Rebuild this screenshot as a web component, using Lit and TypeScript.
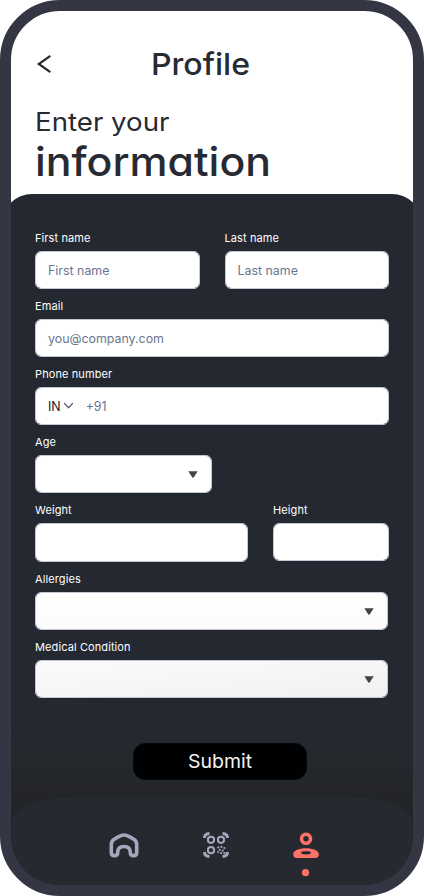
import { LitElement, html, svg, css, nothing } from "lit";
import { customElement, property } from "lit/decorators.js";

@customElement("fitted-text")
class FittedText extends LitElement {
  @property() text = "";
  @property({ type: Number }) width = 0;
  @property({ type: Number }) size = 16;
  static styles = css`
    :host { display: block; line-height: 0; }
    .run { display: block; overflow: visible; }
    .glyphs { fill: currentColor; font-feature-settings: "cv11" 1; }
  `;
  render() {
    const h = Math.round(this.size);
    return html`<svg class="run" width=${this.width} height=${h} role="img">
      ${svg`<text class="glyphs" x="0" y=${h - 4} font-size=${this.size} textLength=${this.width} lengthAdjust="spacingAndGlyphs">${this.text}</text>`}
    </svg>`;
  }
}

@customElement("form-field")
class FormField extends LitElement {
  @property() label = "";
  @property() placeholder = "";
  @property({ type: Boolean }) select = false;
  @property({ type: Boolean }) phone = false;
  static styles = css`
    :host { display: block; min-width: 0; }
    .label { display: block; height: 20px; line-height: 20px; font-size: 11px; font-weight: 400; letter-spacing: 0.1px; color: #fff; white-space: nowrap; }
    .box {
      box-sizing: border-box; height: var(--box-height, 38px); margin-top: 3px; padding: 0 13px 0 12px;
      display: flex; align-items: center; border: 1px solid #c3c7d3; border-radius: 6px;
      background: var(--box-fill, #fff) padding-box; font-size: 12.4px; color: #6b7690; box-shadow: 0 1px 1px #10182818;
    }
    .country { color: #151c2d; }
    .chevron { margin: 0 12px 0 2px; }
    .arrow { margin-left: auto; }
  `;
  render() {
    return html`
      <span class="label">${this.label}</span>
      <div class="box">
        ${this.phone
          ? html`<span class="country">IN</span>
              <svg class="chevron" width="11" height="8" viewBox="0 0 11 8" fill="none" stroke="#59647b" stroke-width="1.3" stroke-linecap="round" stroke-linejoin="round"><path d="M1.5 1.5 5.5 5.7 9.5 1.5" /></svg>`
          : nothing}
        <span>${this.placeholder}</span>
        ${this.select
          ? html`<svg class="arrow" width="10" height="7" viewBox="0 0 10 7"><path d="M.3.2h9.4L5.8 6.2q-.8 1-1.6 0z" fill="#444" /></svg>`
          : nothing}
      </div>
    `;
  }
}

@customElement("app-root")
class AppRoot extends LitElement {
  static styles = css`
    :host { display: block; width: 424px; height: 896px; background: #fff; font-family: Inter, "Liberation Sans", sans-serif; color: #272a32; }
    .phone {
      box-sizing: border-box; width: 424px; height: 896px; border: 11px solid #353643; border-radius: 60px;
      overflow: hidden; background: linear-gradient(#fff 50%, #353643 50%) border-box; display: flex; flex-direction: column;
    }
    .header { height: 183px; box-sizing: border-box; padding: 35px 24px 0; flex: none; }
    .bar { display: flex; align-items: center; height: 36px; }
    .back { margin-left: 1px; }
    .title { margin: -2px 0 0 99px; font-weight: 450; }
    .lead { margin: 27px 0 0 0; font-weight: 400; }
    .main { margin: 4px 0 0 0; font-weight: 450; }
    .panel {
      flex: 1; margin: 0 -9px; border-radius: 30px 30px 0 0; display: flex; flex-direction: column;
      background: linear-gradient(#252830 0%, #242830 70%, #25282d 82%, #232428 88%, #232428 100%);
    }
    .form { display: flex; flex-direction: column; gap: 7px; padding: 34px 33px 0; }
    .row { display: flex; gap: 25px; }
    .half { flex: 1; }
    .age { width: 177px; }
    .weight { width: 213px; --box-height: 39px; }
    .height { flex: 1; }
    .wide { margin-right: 1px; }
    .shade-a { --box-fill: linear-gradient(#fff, #fcfcfc); }
    .shade-b { --box-fill: linear-gradient(175deg, #fbfbfb, #f1f1f1); }
    .submit {
      width: 174px; height: 37px; margin: 45px 0 0 131px; padding: 1px 0 0; border: 1px solid #05080f; border-radius: 12px;
      background: #000102; color: #f4f4f4; display: flex; align-items: center; justify-content: center;
      box-sizing: border-box; font-family: Inter, "Liberation Sans", sans-serif; font-weight: 400;
    }
    .nav {
      box-sizing: border-box; margin: auto 9px 0; height: 88px; padding-left: 98px; border-radius: 60px 60px 49px 49px / 28px 28px 49px 49px;
      background: #262930; display: flex; align-items: flex-start;
    }
    .home { margin-top: 36px; }
    .scan { margin: 34px 0 0 64px; }
    .person { margin: 34px 0 0 64px; }
  `;
  render() {
    return html`
      <div class="phone">
        <header class="header">
          <div class="bar">
            <svg class="back" width="16" height="20" viewBox="0 0 16 20" fill="none" stroke="#272a32" stroke-width="2.2"><path d="M14.3 1.8 2.8 10l11.5 8.2" /></svg>
            <h1 class="title"><fitted-text text="Profile" width="99" size="30.5"></fitted-text></h1>
          </div>
          <p class="lead"><fitted-text text="Enter your" width="134.5" size="25.5"></fitted-text></p>
          <h2 class="main"><fitted-text text="information" width="236" size="40.5"></fitted-text></h2>
        </header>
        <main class="panel">
          <div class="form">
            <div class="row">
              <form-field class="half" label="First name" placeholder="First name"></form-field>
              <form-field class="half" label="Last name" placeholder="Last name"></form-field>
            </div>
            <form-field label="Email" placeholder="you@company.com"></form-field>
            <form-field label="Phone number" placeholder="+91" phone></form-field>
            <form-field class="age" label="Age" select></form-field>
            <div class="row">
              <form-field class="weight" label="Weight"></form-field>
              <form-field class="height" label="Height"></form-field>
            </div>
            <form-field class="wide shade-a" label="Allergies" select></form-field>
            <form-field class="wide shade-b" label="Medical Condition" select></form-field>
          </div>
          <button class="submit"><fitted-text text="Submit" width="64" size="19.3"></fitted-text></button>
          <nav class="nav">
            <svg class="home" width="30" height="25" viewBox="0 0 30 25" fill="none" stroke="#a4a8bd" stroke-width="3.6" stroke-linejoin="round">
              <path d="M2.3 11.5Q2.3 8 5.2 6.2Q8.5 4 12.7 2.4Q15 1.6 17.3 2.4Q21.5 4 24.8 6.2Q27.7 8 27.7 11.5V19.5Q27.7 22.7 24.5 22.7T21.3 19.5Q21.3 13.5 15 13.5T8.7 19.5Q8.7 22.7 5.5 22.7T2.3 19.5Z" />
            </svg>
            <svg class="scan" width="26" height="28" viewBox="0 0 26 28" fill="none" stroke="#a4a8bd">
              <g stroke-width="3"><path d="M1.5 7Q1.5 2.7 6.5 2.5M19.5 2.5Q24.5 2.7 24.5 7M1.5 21Q1.5 25.3 6.5 25.5M19.5 25.5Q24.5 25.3 24.5 21" /></g>
              <g stroke-width="2"><circle cx="8" cy="8.8" r="3.1" /><circle cx="18" cy="8.8" r="3.1" /><circle cx="8" cy="19.2" r="3.1" /></g>
              <g fill="#a4a8bd" stroke="none">
                <circle cx="15.2" cy="16.4" r="1.1" /><circle cx="18.4" cy="15.9" r="1.1" /><circle cx="21.4" cy="17" r="1.1" />
                <circle cx="16.8" cy="18.8" r="1.1" /><circle cx="19.8" cy="19.6" r="1.1" /><circle cx="15.2" cy="21" r="1.1" />
                <circle cx="18.2" cy="22.2" r="1.1" /><circle cx="21.3" cy="22" r="1.1" />
              </g>
            </svg>
            <svg class="person" width="26" height="48" viewBox="0 0 26 48" fill="#fd7167">
              <circle cx="13" cy="7.7" r="4.5" fill="none" stroke="#fd7167" stroke-width="3.6" />
              <path fill-rule="evenodd" d="M.2 23.2C.2 19.5 6 17.2 13 17.2S25.8 19.5 25.8 23.2Q25.8 27 22.3 27H3.7Q.2 27 .2 23.2ZM8 21.8C8 23 10 23.5 13 23.5S18 23 18 21.8 16 20.2 13 20.2 8 20.6 8 21.8Z" />
              <circle cx="12.5" cy="41.7" r="3.6" />
            </svg>
          </nav>
        </main>
      </div>
    `;
  }
}
